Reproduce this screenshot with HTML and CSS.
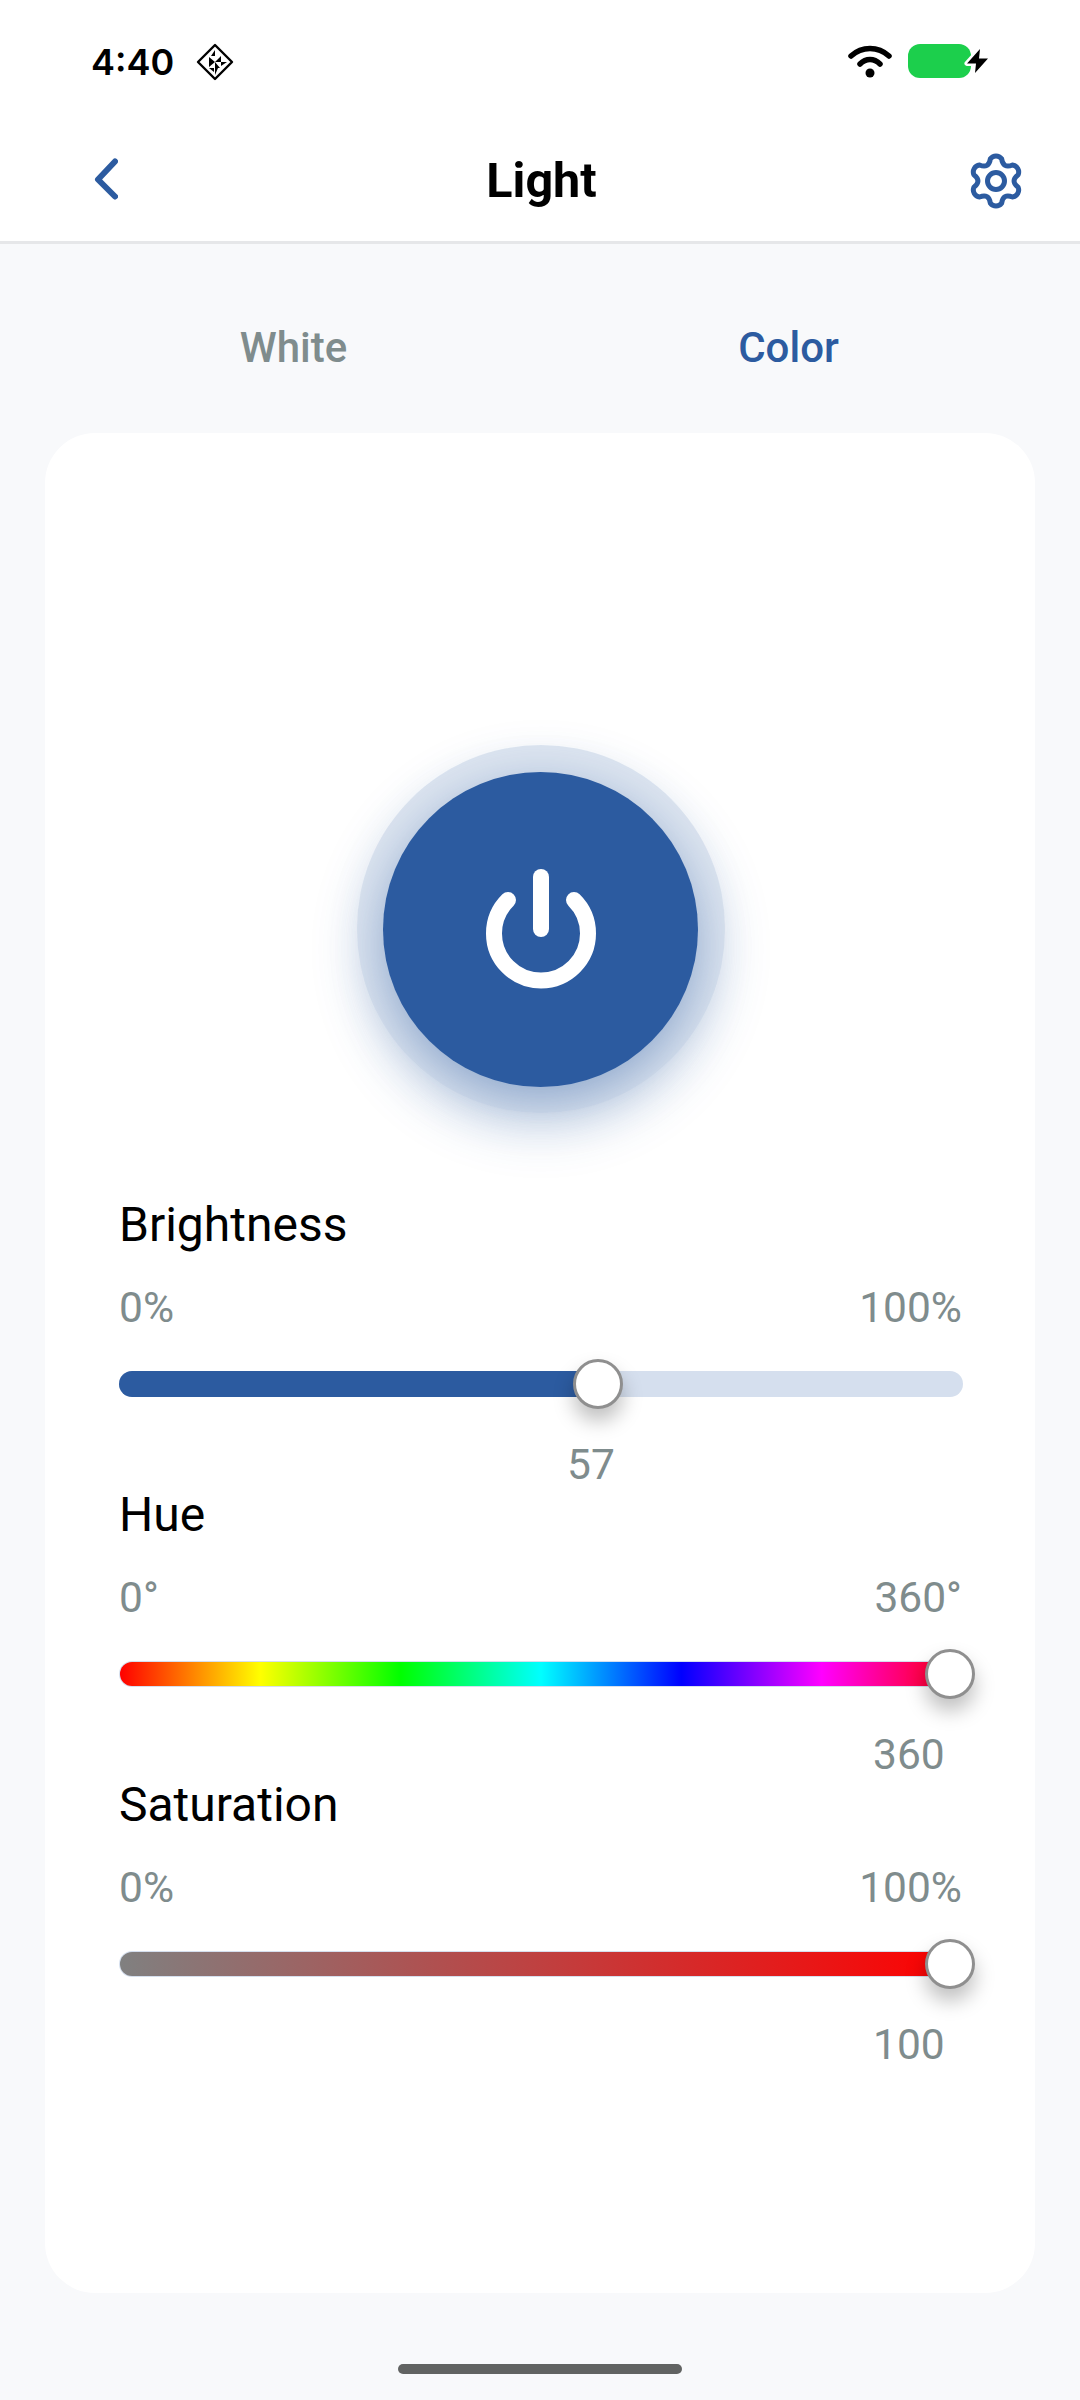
FILE: index.html
```html
<!DOCTYPE html>
<html>
<head>
  <title>Light</title>
  <link rel="stylesheet" href="styles.css">
</head>
<body>
  <div class="top-bar">
    <div class="status-bar">
      <div class="status-left">
        <span class="time">4:40</span>
        <svg class="nfc-icon" viewBox="0 0 38 38">
          <path d="M19 2 36 19 19 36 2 19Z" fill="none" stroke="#000" stroke-width="2.4" stroke-linejoin="round"/>
          <path d="M19 7 19 13 15 13ZM19 19 25 19 25 13ZM13 19 19 19 13 14ZM19 19 19 25 24 25ZM19 25 19 32 22 25ZM19 19 13 19 13 24ZM25 19 31 19 25 23ZM13 25 18 25 18 29Z" fill="#000"/>
        </svg>
      </div>
      <div class="status-right">
        <svg class="wifi-icon" viewBox="0 0 44 34">
          <path d="M3 11C14 1 30 1 41 11" fill="none" stroke="#000" stroke-width="5.5" stroke-linecap="round"/>
          <path d="M12 19C18 13 26 13 32 19" fill="none" stroke="#000" stroke-width="5.5" stroke-linecap="round"/>
          <circle cx="22" cy="28" r="4.5" fill="#000"/>
        </svg>
        <svg class="battery-icon" viewBox="0 0 80 36">
          <rect x="0" y="0" width="63" height="34" rx="12" fill="#1ccf4c"/>
          <path d="M72 5 59 19.500 68 19.500 67 29 80 14.500 71 14.500Z" fill="#fff" stroke="#fff" stroke-width="5" stroke-linejoin="round"/>
          <path d="M72 5 59 19.500 68 19.500 67 29 80 14.500 71 14.500Z" fill="#000"/>
        </svg>
      </div>
    </div>
    <div class="nav-bar">
      <svg class="back-icon" viewBox="0 0 26 48">
        <path d="M23 4.500 6 22.500 23 39.500" fill="none" stroke="#2c5ba0" stroke-width="6" stroke-linecap="round" stroke-linejoin="round"/>
      </svg>
      <span class="nav-title">Light</span>
      <svg class="gear-icon" viewBox="-29 -29 58 58">
        <path d="M-5.600 -22.300A7 7 0 0 1 5.600 -22.300Q7 -12.100 16.500 -16A7 7 0 0 1 22.100 -6.300Q14 0 22.100 6.300A7 7 0 0 1 16.500 16Q7 12.100 5.600 22.300A7 7 0 0 1 -5.600 22.300Q-7 12.100 -16.500 16A7 7 0 0 1 -22.100 6.300Q-14 0 -22.100 -6.300A7 7 0 0 1 -16.500 -16Q-7 -12.100 -5.600 -22.300Z" fill="none" stroke="#2c5ba0" stroke-width="5"/>
        <circle r="8.500" fill="none" stroke="#2c5ba0" stroke-width="5"/>
      </svg>
    </div>
  </div>

  <div class="tabs">
    <div class="tab">White</div>
    <div class="tab active">Color</div>
  </div>

  <div class="card">
    <div class="power-ring">
      <div class="power-btn">
        <svg class="power-icon" viewBox="0 0 110 120">
          <path d="M22 31A47 47 0 1 0 88 31" fill="none" stroke="#fff" stroke-width="16" stroke-linecap="round"/>
          <path d="M55 8V60" fill="none" stroke="#fff" stroke-width="16" stroke-linecap="round"/>
        </svg>
      </div>
    </div>

    <div class="slider">
      <div class="slider-label">Brightness</div>
      <div class="slider-range"><span>0%</span><span>100%</span></div>
      <div class="track">
        <div class="track-bar">
          <div class="track-fill brightness" style="width: 479px"></div>
        </div>
        <div class="thumb" style="left: 454px"></div>
      </div>
      <div class="slider-value" style="margin-left: 448px">57</div>
    </div>

    <div class="slider">
      <div class="slider-label">Hue</div>
      <div class="slider-range"><span>0°</span><span>360°</span></div>
      <div class="track">
        <div class="track-bar">
          <div class="track-fill hue"></div>
        </div>
        <div class="thumb" style="left: 806px"></div>
      </div>
      <div class="slider-value" style="margin-left: 754px">360</div>
    </div>

    <div class="slider">
      <div class="slider-label">Saturation</div>
      <div class="slider-range"><span>0%</span><span>100%</span></div>
      <div class="track">
        <div class="track-bar">
          <div class="track-fill saturation"></div>
        </div>
        <div class="thumb" style="left: 806px"></div>
      </div>
      <div class="slider-value" style="margin-left: 754px">100</div>
    </div>
  </div>

  <div class="home-area">
    <div class="home-bar"></div>
  </div>
</body>
</html>
```

FILE: styles.css
```css
* {
  box-sizing: border-box;
}

body {
  font-family: Roboto, 'Noto Sans', sans-serif;
  margin: 0;
  width: 1080px;
  height: 2400px;
  overflow: hidden;
  display: flex;
  flex-direction: column;
  background-color: #f8f9fb;
}

.top-bar {
  height: 244px;
  background-color: #fff;
  border-bottom: 3px solid #e6e7e9;
}

.status-bar {
  height: 120px;
  padding: 4px 92px 0 91px;
  display: flex;
  justify-content: space-between;
  align-items: center;
}

.status-left,
.status-right {
  display: flex;
  align-items: center;
}

.time {
  font-family: Inter, Roboto, sans-serif;
  font-size: 36px;
  font-weight: 600;
  color: #000;
}

.nfc-icon {
  width: 38px;
  height: 38px;
  margin-left: 22px;
}

.wifi-icon {
  width: 44px;
  height: 34px;
}

.battery-icon {
  width: 80px;
  height: 36px;
  margin-left: 16px;
}

.nav-bar {
  height: 121px;
  padding: 0 55px 0 92px;
  display: flex;
  justify-content: space-between;
  align-items: center;
  position: relative;
}

.back-icon {
  width: 26px;
  height: 48px;
}

.nav-title {
  position: absolute;
  left: 3px;
  right: 0;
  text-align: center;
  font-size: 48.500px;
  font-weight: 700;
  color: #000;
}

.gear-icon {
  width: 58px;
  height: 58px;
}

.tabs {
  height: 189px;
  padding: 18px 44px 0 46px;
  display: flex;
  align-items: center;
}

.tab {
  flex: 1;
  text-align: center;
  font-size: 42px;
  font-weight: 500;
  color: #7f8c8d;
}

.tab.active {
  color: #2c5ba0;
}

.card {
  height: 1860px;
  margin: 0 45px;
  padding: 312px 73px 0 74px;
  background-color: #fff;
  border-radius: 50px;
}

.power-ring {
  width: 368px;
  height: 368px;
  margin: 0 auto 82px;
  border-radius: 50%;
  display: flex;
  justify-content: center;
  align-items: center;
  background-color: rgba(44, 91, 160, 0.16);
  box-shadow: 0 20px 50px rgba(44, 91, 160, 0.16);
}

.power-btn {
  width: 315px;
  height: 315px;
  border-radius: 50%;
  display: flex;
  justify-content: center;
  align-items: center;
  background-color: #2c5ba0;
  box-shadow: 0 16px 50px rgba(44, 91, 160, 0.45);
}

.power-icon {
  width: 110px;
  height: 120px;
}

.slider-label {
  font-size: 48px;
  line-height: 60px;
  color: #000;
}

.slider-range {
  display: flex;
  justify-content: space-between;
  margin-top: 30px;
  font-size: 42.500px;
  line-height: 46px;
  color: #7f8c8d;
}

.track {
  position: relative;
  height: 50px;
  margin-top: 28px;
  margin-right: -1px;
  display: flex;
  align-items: center;
}

.track-bar {
  width: 100%;
  height: 26px;
  border-radius: 13px;
  overflow: hidden;
  background-color: #d5dfee;
}

.track-fill {
  height: 100%;
}

.brightness {
  background-color: #2c5ba0;
}

.hue,
.saturation {
  height: 24px;
  margin: 1px;
  border-radius: 12px;
}

.hue {
  background: linear-gradient(to right, #f00, #ff0, #0f0, #0ff, #00f, #f0f, #f00);
}

.saturation {
  background: linear-gradient(to right, #808080, #f00);
}

.thumb {
  position: absolute;
  top: 0;
  width: 50px;
  height: 50px;
  border-radius: 50%;
  border: 3px solid #8f8f8f;
  background-color: #fff;
  box-shadow: 0 12px 20px rgba(0, 0, 0, 0.25);
}

.slider-value {
  margin-top: 36px;
  font-size: 42.500px;
  line-height: 40px;
  color: #7f8c8d;
}

.home-area {
  flex: 1;
  display: flex;
  justify-content: center;
  padding-top: 71px;
}

.home-bar {
  width: 284px;
  height: 10px;
  border-radius: 5px;
  background-color: #616362;
}
```
